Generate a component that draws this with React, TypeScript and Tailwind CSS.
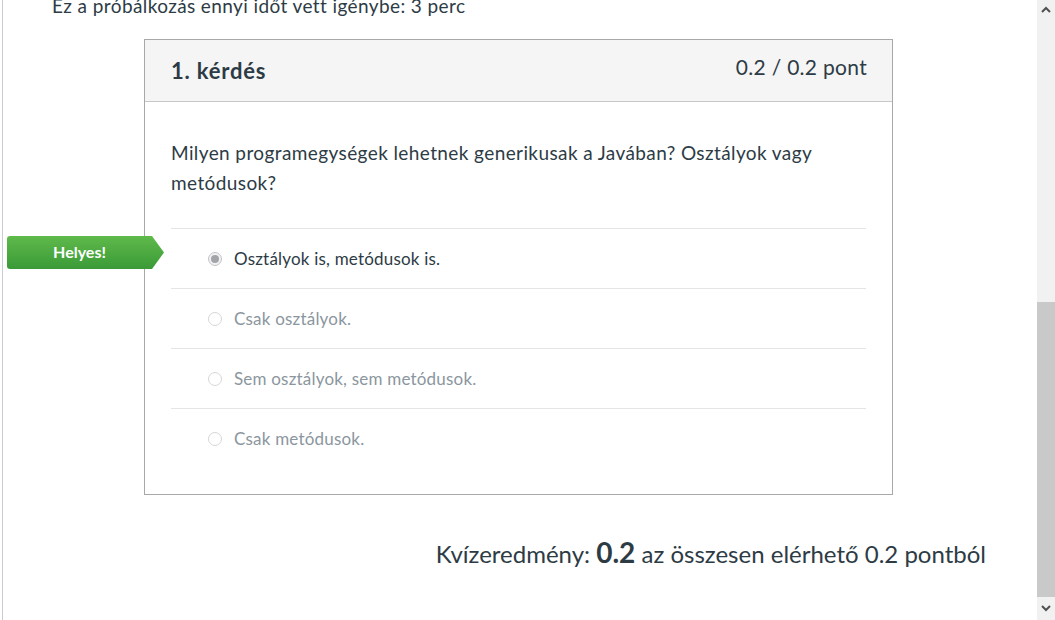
import React from "react";

const answers = [
  { text: "Osztályok is, metódusok is.", selected: true },
  { text: "Csak osztályok.", selected: false },
  { text: "Sem osztályok, sem metódusok.", selected: false },
  { text: "Csak metódusok.", selected: false },
];

function Radio({ selected }: { selected: boolean }) {
  return (
    <span
      className={
        "flex h-[14px] w-[14px] shrink-0 items-center justify-center rounded-full border " +
        (selected ? "border-[#c3c3c8] bg-[#f2f2f4]" : "border-[#d5d7d9] bg-white")
      }
    >
      {selected && <span className="h-[8px] w-[8px] rounded-full bg-[#a3a4aa]" />}
    </span>
  );
}

export default function App() {
  return (
    <div
      className="flex h-[620px] w-[1055px] overflow-hidden bg-white text-[#2d3b45]"
      style={{ fontFamily: "Lato, 'Noto Sans', sans-serif" }}
    >
      <div className="relative flex-1 border-l-[1px] border-[#c7cdd1] ml-[2px] h-full">
        <div className="mt-[-7px] pl-[49px] text-[19px] leading-[26px] tracking-[0.4px]">
          Ez a próbálkozás ennyi időt vett igénybe: 3 perc
        </div>

        <div className="relative ml-[141px] mt-[20px] w-[749px] border border-[#a8a8a8] bg-white">
          <div className="flex h-[62px] items-start justify-between border-b border-[#c7c7c7] bg-[#f5f5f5] pl-[26px] pr-[25px]">
            <div className="pt-[17px] text-[22px] font-bold leading-[28px] tracking-[0.8px]">1. kérdés</div>
            <div className="pt-[13px] text-[21px] leading-[28px] tracking-[0.3px]">0.2 / 0.2 pont</div>
          </div>

          <div className="px-[26px] pb-[26px]">
            <p className="pt-[36px] pb-[30px] pr-[20px] text-[19px] leading-[30px] tracking-[0.4px]">
              Milyen programegységek lehetnek generikusak a Javában? Osztályok vagy metódusok?
            </p>
            <div>
              {answers.map((a, i) => (
                <div
                  key={i}
                  className="relative flex h-[60px] items-center gap-[12px] border-t border-[#e3e5e6] pl-[37px]"
                >
                  {a.selected && (
                    <div className="absolute left-[-164px] top-[7px] flex h-[33px] w-[157px] items-center [clip-path:polygon(0_0,145px_0,157px_50%,145px_100%,0_100%)] bg-gradient-to-b from-[#5fba4b] to-[#3a9a37] rounded-l-[3px]">
                      <span className="w-[145px] pb-[1px] text-center text-[16px] font-bold leading-none text-white">
                        Helyes!
                      </span>
                    </div>
                  )}
                  <Radio selected={a.selected} />
                  <span
                    className={
                      "text-[17px] leading-[20px] tracking-[0.2px] " +
                      (a.selected ? "text-[#2d3b45]" : "text-[#8b969e]")
                    }
                  >
                    {a.text}
                  </span>
                </div>
              ))}
            </div>
          </div>
        </div>

        <div className="mt-[41px] flex items-baseline justify-end pr-[51px] text-[24px] leading-[32px]">
          <span>Kvízeredmény:&nbsp;</span>
          <span className="text-[28px] font-bold">0.2</span>
          <span>&nbsp;az összesen elérhető 0.2 pontból</span>
        </div>
      </div>

      <div className="flex h-full w-[18px] flex-col bg-[#f1f1f1]">
        <div className="flex h-[18px] items-center justify-center">
          <svg width="10" height="7" viewBox="0 0 10 7">
            <path d="M1 6 L5 2 L9 6" fill="none" stroke="#505050" strokeWidth="2" />
          </svg>
        </div>
        <div className="h-[284px]" />
        <div className="h-[295px] bg-[#c9c9c9]" />
        <div className="flex flex-1 items-center justify-center">
          <svg width="10" height="7" viewBox="0 0 10 7">
            <path d="M1 1 L5 5 L9 1" fill="none" stroke="#505050" strokeWidth="2" />
          </svg>
        </div>
      </div>
    </div>
  );
}
